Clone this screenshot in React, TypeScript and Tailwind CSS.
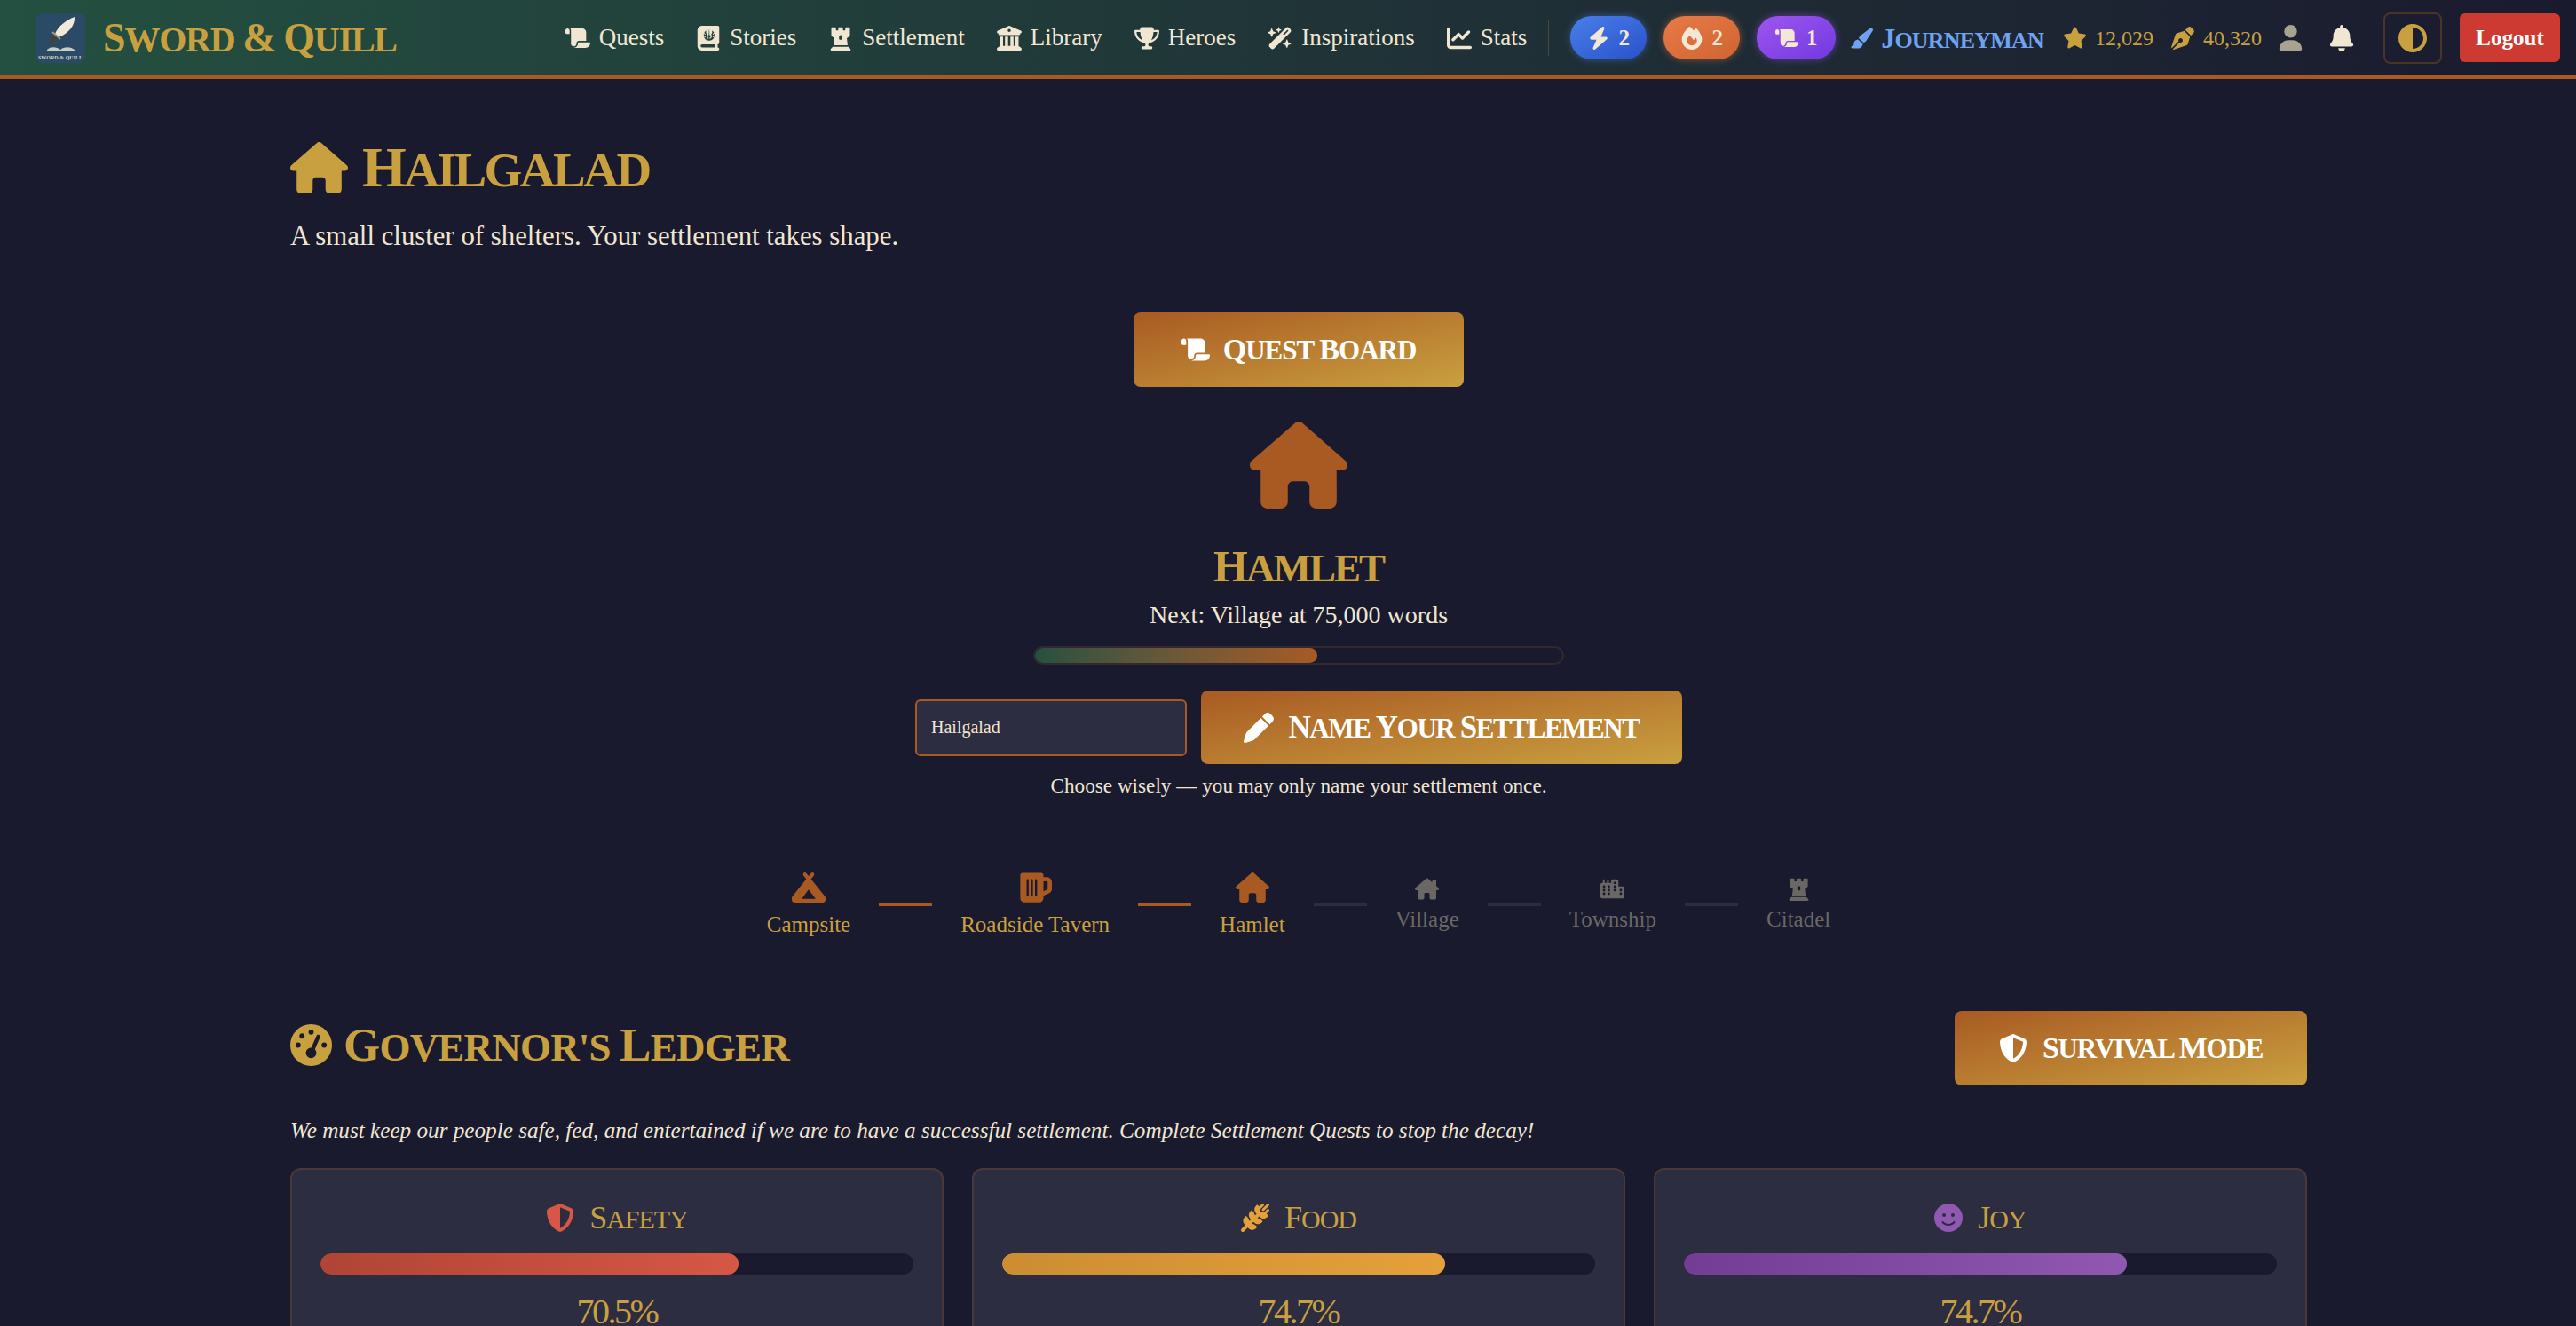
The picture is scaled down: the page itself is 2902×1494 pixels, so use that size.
import {
  FaScroll,
  FaBookJournalWhills,
  FaChessRook,
  FaBuildingColumns,
  FaTrophy,
  FaWandMagicSparkles,
  FaChartLine,
  FaBolt,
  FaFire,
  FaPenNib,
  FaPaintbrush,
  FaStar,
  FaUser,
  FaBell,
  FaCircleHalfStroke,
  FaHouse,
  FaHouseChimney,
  FaPen,
  FaCampground,
  FaBeerMugEmpty,
  FaCity,
  FaGaugeHigh,
  FaShieldHalved,
  FaWheatAwn,
  FaFaceSmile,
} from "react-icons/fa6";

const serif = "font-['Liberation_Serif',serif]";

const navLinks = [
  { label: "Quests", icon: FaScroll },
  { label: "Stories", icon: FaBookJournalWhills },
  { label: "Settlement", icon: FaChessRook },
  { label: "Library", icon: FaBuildingColumns },
  { label: "Heroes", icon: FaTrophy },
  { label: "Inspirations", icon: FaWandMagicSparkles },
  { label: "Stats", icon: FaChartLine },
];

const steps = [
  { label: "Campsite", icon: FaCampground, done: true },
  { label: "Roadside Tavern", icon: FaBeerMugEmpty, done: true },
  { label: "Hamlet", icon: FaHouse, done: true },
  { label: "Village", icon: FaHouseChimney, done: false },
  { label: "Township", icon: FaCity, done: false },
  { label: "Citadel", icon: FaChessRook, done: false },
];

// the app's display face has tall small caps, so first letters and the rest get their own size
function Caps({ text, big, small, className = "" }: { text: string; big: string; small: string; className?: string }) {
  return (
    <span className={`block leading-none whitespace-nowrap ${big} ${className}`}>
      {text.split(" ").map((word, i) => (
        <span key={i}>
          {i > 0 && <span className={small}> </span>}
          {word[0]}
          <span className={small}>{word.slice(1).toUpperCase()}</span>
        </span>
      ))}
    </span>
  );
}

function Logo() {
  return (
    <div className="w-14 h-14 rounded-lg bg-[#2a4a66] flex flex-col items-center overflow-hidden shrink-0">
      <svg viewBox="0 0 56 46" className="w-14 h-[46px] shrink-0">
        <path d="M44 4 C45 13 37 23 26 27 C24 24 23 24 22 23 C26 14 34 8 44 4 Z" fill="#f2ead8" />
        <path d="M24 25 L16 35" stroke="#5a3a20" strokeWidth="2.5" />
        <path d="M19 21 L28 29" stroke="#a89878" strokeWidth="2" />
        <path d="M13 41 C18 37 24 38 28 41 C32 38 38 37 44 41 L44 43 L13 43 Z" fill="#c8cfc0" />
      </svg>
      <span className="text-[6px] leading-[8px] font-bold text-[#d8d8c8] whitespace-nowrap">SWORD &amp; QUILL</span>
    </div>
  );
}

function Badge({ color, glow, width, icon: Icon, n }: { color: string; glow: string; width: string; icon: typeof FaBolt; n: string }) {
  return (
    <span className={`h-[49px] rounded-[24px] bg-gradient-to-br ${color} ${glow} ${width} flex items-center justify-center gap-[9px] text-[#f2e8d5] text-[25px] font-bold`}>
      <Icon className="h-[26px] w-auto" />
      {n}
    </span>
  );
}

function NavBar() {
  return (
    <header className="h-[89px] border-b-4 border-[#a85a22] bg-gradient-to-r from-[#235040] to-[#1a1a2e] flex items-center pl-10 pr-[18px] shrink-0">
      <Logo />
      <span className="ml-5 font-bold text-[#c9a040]">
        <Caps text="Sword & Quill" big="text-[46px]" small="text-[40px]" className="tracking-[-1.2px]" />
      </span>
      <nav className="ml-auto flex items-center gap-[36px] text-[27px] text-[#f0e6d2]">
        {navLinks.map((l) => (
          <a key={l.label} className="flex items-center gap-[10px] whitespace-nowrap">
            <l.icon className="h-[28px] w-auto" />
            {l.label}
          </a>
        ))}
      </nav>
      <div className="w-px h-10 bg-[#4a4a3a] mx-[24px]" />
      <div className="flex items-center gap-[19px]">
        <Badge color="from-[#4a7fe8] to-[#2a50cc]" glow="shadow-[0_0_8px_rgba(74,127,232,0.5)]" width="w-[86px]" icon={FaBolt} n="2" />
        <Badge color="from-[#e87a48] to-[#d0642f]" glow="shadow-[0_0_8px_rgba(232,122,72,0.5)]" width="w-[86px]" icon={FaFire} n="2" />
        <Badge color="from-[#a055f0] to-[#7038e0]" glow="shadow-[0_0_8px_rgba(160,85,240,0.5)]" width="w-[89px]" icon={FaScroll} n="1" />
      </div>
      <div className="ml-4 flex items-center gap-[9px] text-[#6fa3ef] font-bold">
        <FaPaintbrush className="w-[26px] h-[26px]" />
        <Caps text="Journeyman" big="text-[32px]" small="text-[26px]" className="tracking-[-0.8px]" />
      </div>
      <div className="ml-[22px] flex items-center gap-[9px] text-[#c9a040] text-[24px]">
        <FaStar className="w-[27px] h-[27px]" />
        12,029
      </div>
      <div className="ml-5 flex items-center gap-[10px] text-[#c9a040] text-[24px]">
        <FaPenNib className="w-[26px] h-[26px]" />
        40,320
      </div>
      <FaUser className="ml-[18px] h-[29px] w-auto text-[#a8a290]" />
      <FaBell className="ml-7 h-[30px] w-auto text-[#f0e6d2]" />
      <button className="ml-[32px] w-[66px] h-[58px] rounded-lg border-2 border-[#4a3428] flex items-center justify-center">
        <FaCircleHalfStroke className="w-8 h-8 text-[#c9a040]" />
      </button>
      <button className="ml-5 w-[113px] h-[55px] rounded-md bg-[#cc3a32] text-white font-bold text-[25px]">Logout</button>
    </header>
  );
}

function GradientButton({ icon: Icon, label, big, small, tracking, className, iconClass }: { icon: typeof FaBolt; label: string; big: string; small: string; tracking: string; className: string; iconClass: string }) {
  return (
    <button className={`rounded-lg bg-gradient-to-br from-[#a85a22] to-[#c9a040] text-white font-bold flex items-center justify-center ${className}`}>
      <Icon className={iconClass} />
      <Caps text={label} big={big} small={small} className={tracking} />
    </button>
  );
}

function StatCard({ label, icon: Icon, iconColor, bar, width, value }: { label: string; icon: typeof FaBolt; iconColor: string; bar: string; width: string; value: string }) {
  return (
    <div className="h-[240px] rounded-xl border-2 border-[#4a3838] bg-[#2d2d42] px-8 pt-[31px]">
      <div className="h-[46px] flex items-center justify-center gap-[17px] text-[#c9a040]">
        <Icon className={`h-8 w-auto ${iconColor}`} />
        <Caps text={label} big="text-[36px]" small="text-[30px]" className="tracking-[-1px]" />
      </div>
      <div className="mt-[17px] h-6 rounded-xl bg-[#1a1a2e] overflow-hidden">
        <div className={`h-full rounded-xl bg-gradient-to-r ${bar}`} style={{ width }} />
      </div>
      <p className="mt-[18px] text-center text-[#c9a040] text-[40px] leading-[48px] tracking-[-2.5px]">{value}</p>
    </div>
  );
}

function Stepper() {
  return (
    <div className="mt-[81px] flex items-center">
      {steps.map((s, i) => (
        <div key={s.label} className="flex items-center">
          {i > 0 && <div className={`w-[60px] h-1 mx-8 ${s.done ? "bg-[#a85a22]" : "bg-[#2d2d42]"}`} />}
          <div className={`flex flex-col items-center ${s.done ? "text-[#c9a040]" : "text-[#6a6764]"}`}>
            {s.done ? (
              <s.icon className="h-[38px] w-auto text-[#a85a22]" />
            ) : (
              <s.icon className="h-[27px] w-auto" />
            )}
            <span className={`${s.done ? "mt-2" : "mt-[6px]"} text-[25px] leading-[30px] whitespace-nowrap`}>{s.label}</span>
          </div>
        </div>
      ))}
    </div>
  );
}

export default function App() {
  return (
    <div className={`${serif} h-[1494px] overflow-hidden bg-[#1a1a2e] flex flex-col`}>
      <NavBar />
      <main className="w-[2272px] ml-[327px]">
        <h1 className="mt-[62px] h-[76px] flex items-center gap-[16px] text-[#c9a040] font-bold">
          <FaHouse className="w-[65px] h-[58px]" />
          <Caps text="Hailgalad" big="text-[64px]" small="text-[55px]" className="tracking-[-2.5px]" />
        </h1>
        <p className="mt-5 text-[30.8px] leading-[38px] text-[#f0e6d2]">A small cluster of shelters. Your settlement takes shape.</p>

        <div className="mt-[67px] flex flex-col items-center">
          <GradientButton icon={FaScroll} label="Quest Board" big="text-[34px]" small="text-[31px]" tracking="tracking-[-1px]" className="w-[372px] h-[84px] gap-[15px]" iconClass="h-8 w-auto" />
          <FaHouse className="mt-[39px] w-[110px] h-[98px] text-[#a85a22]" />
          <h2 className="mt-[35px] h-[60px] flex items-center text-[#c9a040] font-bold">
            <Caps text="Hamlet" big="text-[50px]" small="text-[45px]" className="tracking-[-2px]" />
          </h2>
          <p className="mt-[7px] text-[#f0e6d2] text-[28px] leading-[36px]">Next: Village at 75,000 words</p>
          <div className="mt-[17px] w-[598px] h-[21px] rounded-xl border-2 border-[#33282e] overflow-hidden">
            <div className="h-full w-[53.5%] rounded-xl bg-gradient-to-r from-[#235040] to-[#a85a22]" />
          </div>
          <div className="mt-[29px] flex items-center gap-4">
            <input
              readOnly
              value="Hailgalad"
              className="w-[306px] h-16 px-4 rounded-md border-2 border-[#a85a22] bg-[#2d2d42] text-[#f0e6d2] text-[20px] outline-none"
            />
            <GradientButton icon={FaPen} label="Name Your Settlement" big="text-[35px]" small="text-[31px]" tracking="tracking-[-1.4px]" className="w-[542px] h-[83px] gap-[16px]" iconClass="h-[34px] w-auto" />
          </div>
          <p className="mt-[9px] text-[#f0e6d2] text-[23.2px] leading-[30px]">Choose wisely — you may only name your settlement once.</p>
          <Stepper />
        </div>

        <div className="mt-[82px] flex items-center justify-between">
          <h2 className="h-[68px] mb-[8px] flex items-center gap-[13px] text-[#c9a040] font-bold">
            <FaGaugeHigh className="h-[47px] w-auto" />
            <Caps text="Governor's Ledger" big="text-[53px]" small="text-[45px]" className="tracking-[-0.8px]" />
          </h2>
          <GradientButton icon={FaShieldHalved} label="Survival Mode" big="text-[34px]" small="text-[31px]" tracking="tracking-[-1.2px]" className="w-[397px] h-[84px] gap-[17px]" iconClass="h-8 w-auto" />
        </div>
        <p className="mt-[34px] italic text-[#f0e6d2] text-[25.2px] leading-[34px]">
          We must keep our people safe, fed, and entertained if we are to have a successful settlement. Complete Settlement Quests to stop the decay!
        </p>
        <div className="mt-[25px] grid grid-cols-3 gap-[32px]">
          <StatCard label="Safety" icon={FaShieldHalved} iconColor="text-[#d65745]" bar="from-[#b04535] to-[#d65745]" width="70.5%" value="70.5%" />
          <StatCard label="Food" icon={FaWheatAwn} iconColor="text-[#e5a03a]" bar="from-[#cc8d33] to-[#e5a03a]" width="74.7%" value="74.7%" />
          <StatCard label="Joy" icon={FaFaceSmile} iconColor="text-[#9058b0]" bar="from-[#733d94] to-[#9058b0]" width="74.7%" value="74.7%" />
        </div>
      </main>
    </div>
  );
}
